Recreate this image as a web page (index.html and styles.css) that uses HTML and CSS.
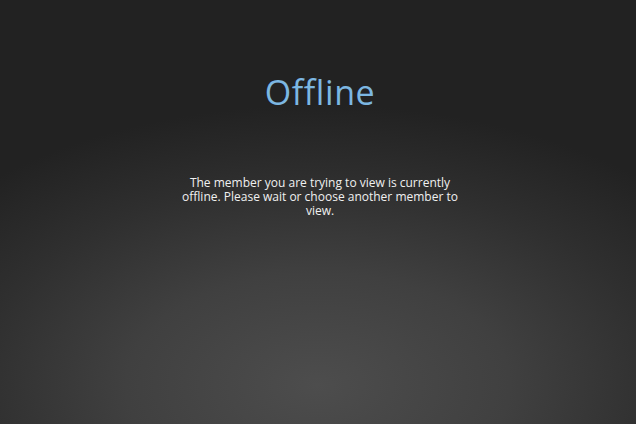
FILE: index.html
```html
<!DOCTYPE html>
<html>
<head>
<meta charset="utf-8">
<link rel="stylesheet" href="styles.css">
</head>
<body>
<main class="screen">
  <h1 class="title">Offline</h1>
  <p class="message">The member you are trying to view is currently offline. Please wait or choose another member to view.</p>
</main>
</body>
</html>
```
FILE: styles.css
```css
html, body {
  margin: 0;
  padding: 0;
  height: 100%;
}
body {
  background: #222;
}
.screen {
  height: 424px;
  box-sizing: border-box;
  display: flex;
  flex-direction: column;
  align-items: center;
  padding-top: 72px;
  padding-left: 4px;
  font-family: "Open Sans", "Noto Sans", sans-serif;
  background: radial-gradient(ellipse 480px 280px at 50% 385px, #4d4d4d 0%, #404040 40%, #2f2f2f 72%, #222 100%);
}
.title {
  margin: 0;
  font-weight: 400;
  font-size: 34px;
  line-height: 40px;
  color: #7cb7e2;
  letter-spacing: 0.6px;
}
.message {
  margin: 64px 0 0;
  width: 290px;
  text-align: center;
  font-size: 12px;
  line-height: 14px;
  color: #f0f0f0;
}
```
